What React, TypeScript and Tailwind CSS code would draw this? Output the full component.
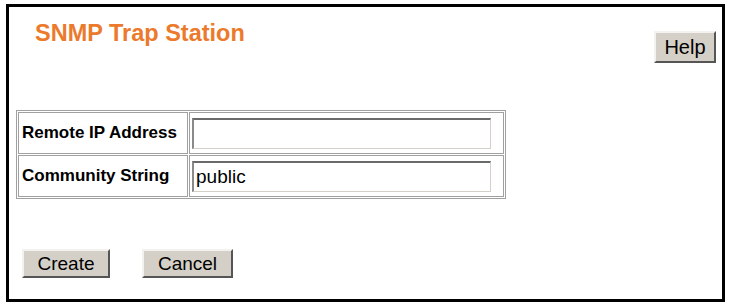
export default function App() {
  return (
    <div className="w-[729px] h-[304px] bg-white overflow-hidden font-['Liberation_Sans',Arial,sans-serif] pt-[4px] pl-[6px]">
      <div className="w-[719px] h-[298px] border-[3px] border-black flex flex-col">
        {/* Header */}
        <div className="flex justify-between items-start">
          <h1 className="ml-[26px] mt-[15px] text-[23.5px] leading-[23px] font-bold text-[#ec7a2c]">
            SNMP Trap Station
          </h1>
          <button className="mt-[24px] mr-[6px] w-[62px] h-[32px] bg-[#d4d0c8] text-[20px] leading-none text-black border-2 border-t-[#f4f2ee] border-l-[#f4f2ee] border-r-[#555] border-b-[#555]">
            Help
          </button>
        </div>

        {/* Form table */}
        <table className="ml-[7px] mt-[47px] w-[490px] h-[89px] border border-[#a0a0a0] border-separate border-spacing-[1px]">
          <tbody>
            <tr>
              <td className="w-[170px] border border-[#a0a0a0] px-[3px] text-[17px] font-bold text-black whitespace-nowrap">
                Remote IP Address
              </td>
              <td className="border border-[#a0a0a0] pl-[2px]">
                <input
                  type="text"
                  className="w-[299px] h-[31px] bg-white border-t-2 border-l-2 border-t-[#6a6a6a] border-l-[#8a8a8a] border-r border-b border-r-[#d4d0c8] border-b-[#d4d0c8] px-[2px] text-[19px] outline-none"
                />
              </td>
            </tr>
            <tr>
              <td className="border border-[#a0a0a0] px-[3px] text-[17px] font-bold text-black whitespace-nowrap">
                Community String
              </td>
              <td className="border border-[#a0a0a0] pl-[2px]">
                <input
                  type="text"
                  defaultValue="public"
                  className="w-[299px] h-[31px] bg-white border-t-2 border-l-2 border-t-[#6a6a6a] border-l-[#8a8a8a] border-r border-b border-r-[#d4d0c8] border-b-[#d4d0c8] px-[2px] text-[19px] text-black outline-none"
                />
              </td>
            </tr>
          </tbody>
        </table>

        {/* Actions */}
        <div className="ml-[13px] mt-[50px] flex gap-[32px]">
          <button className="w-[88px] h-[29px] bg-[#d4d0c8] text-[19px] leading-none text-black border-2 border-t-[#f4f2ee] border-l-[#f4f2ee] border-r-[#555] border-b-[#555]">
            Create
          </button>
          <button className="w-[91px] h-[29px] bg-[#d4d0c8] text-[19px] leading-none text-black border-2 border-t-[#f4f2ee] border-l-[#f4f2ee] border-r-[#555] border-b-[#555]">
            Cancel
          </button>
        </div>
      </div>
    </div>
  );
}
